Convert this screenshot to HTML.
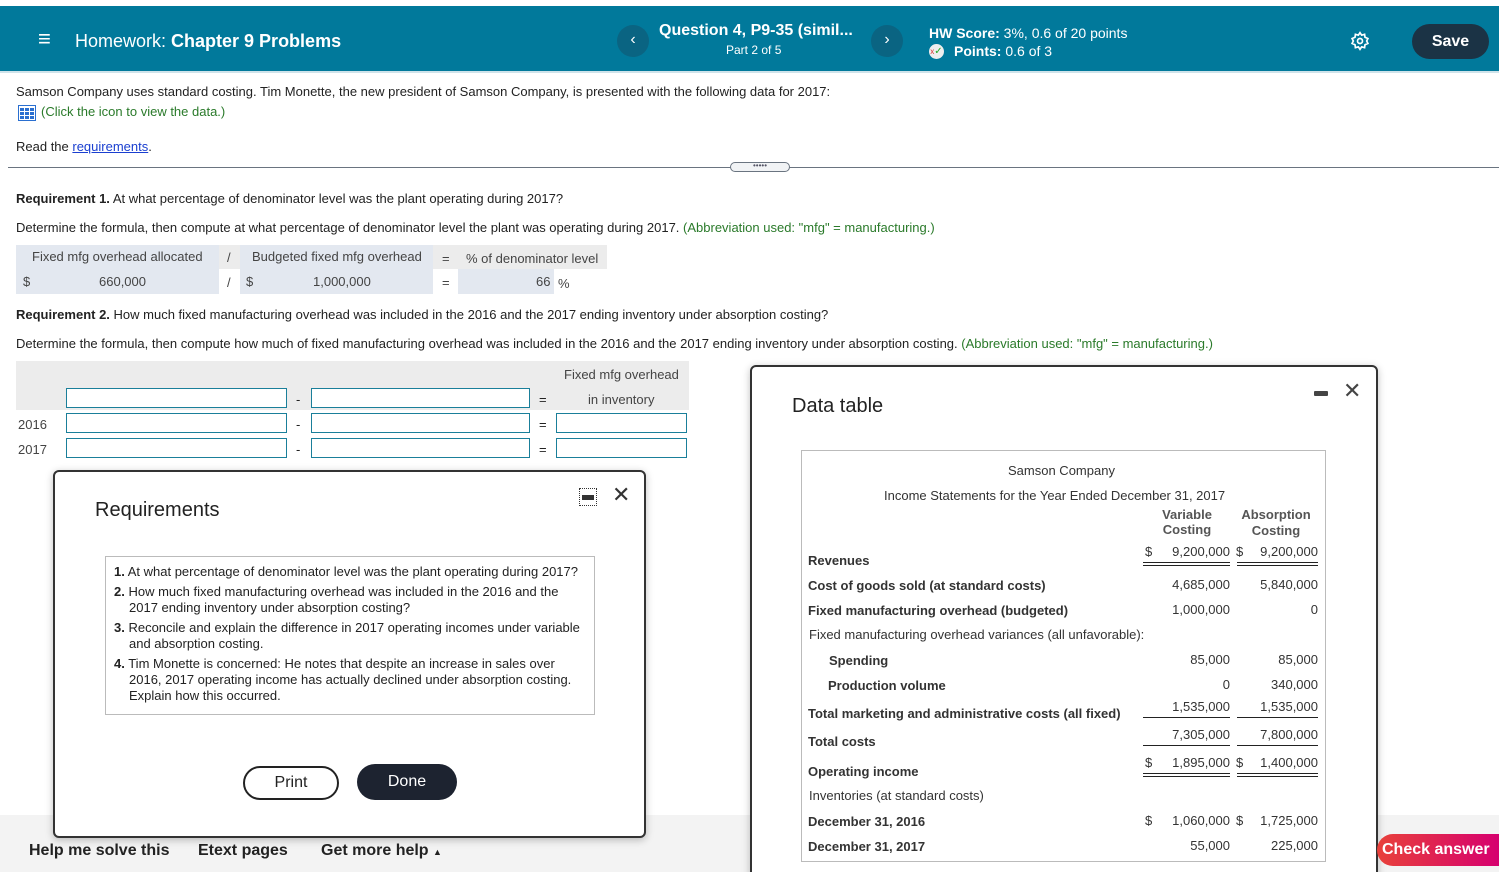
<!DOCTYPE html>
<html style="height:872px;overflow:hidden"><head><meta charset="utf-8"><style>
*{box-sizing:border-box;margin:0;padding:0}
body{width:1499px;height:872px;overflow:hidden;position:relative;background:#fff;font-family:"Liberation Sans",Arial,sans-serif;color:#222;font-size:13px}
.a{position:absolute;white-space:nowrap}
.hdr{position:absolute;left:0;top:6px;width:1499px;height:67px;background:#01799b;border-bottom:2px solid #cfe3ea}
.w{color:#fff}
.circ{position:absolute;width:32px;height:32px;border-radius:50%;background:#0a6482;color:#fff;text-align:center;line-height:30px;font-size:16px}
.inp{position:absolute;height:20px;border:1px solid #1a7f9a;background:#fff}
.g{color:#2a7a2a}
.modal{position:absolute;background:#fff;border:2px solid #333;border-radius:6px;box-shadow:0 2px 8px rgba(0,0,0,.25)}
.r{text-align:right}
.dt{font-size:13px;color:#333}
.b{font-weight:bold}
</style></head><body>
<div class="hdr">
 <div class="a w" style="left:38px;top:21px;font-size:22px;line-height:24px">&#8801;</div>
 <div class="a w" style="left:75px;top:25px;font-size:18px">Homework: <b>Chapter 9 Problems</b></div>
 <div class="circ" style="left:617px;top:19px">&#8249;</div>
 <div class="a w b" style="left:659px;top:16px;font-size:16px">Question 4, P9-35 (simil...</div>
 <div class="a w" style="left:726px;top:37px;font-size:12px">Part 2 of 5</div>
 <div class="circ" style="left:871px;top:19px">&#8250;</div>
 <div class="a w" style="left:929px;top:19px;font-size:14px"><b>HW Score:</b> 3%, 0.6 of 20 points</div>
 <div class="a" style="left:929px;top:38px;width:15px;height:15px;border-radius:50%;background:#eee;color:#2a2;font-size:10px;line-height:15px;text-align:center"><span style="color:#d33;font-size:8px">x</span>&#10003;</div>
 <div class="a w" style="left:954px;top:37px;font-size:14px"><b>Points:</b> 0.6 of 3</div>
 <svg class="a" style="left:1350px;top:25px" width="20" height="20" viewBox="0 0 24 24" fill="none" stroke="#fff" stroke-width="2"><circle cx="12" cy="12" r="3"/><path d="M12 2l2 3 3.5-1 .5 3.5 3.5 1.5-1.5 3 1.5 3-3.5 1.5-.5 3.5-3.5-1-2 3-2-3-3.5 1-.5-3.5L2.5 15 4 12 2.5 9 6 7.5 6.5 4 10 5z"/></svg>
 <div class="a w b" style="left:1412px;top:18px;width:77px;height:35px;border-radius:18px;background:#1b3345;text-align:center;line-height:35px;font-size:16px">Save</div>
</div>

<div class="a" style="left:16px;top:84px">Samson Company uses standard costing. Tim Monette, the new president of Samson Company, is presented with the following data for 2017:</div>
<svg class="a" style="left:18px;top:105px" width="18" height="16" viewBox="0 0 18 16"><rect x="0.5" y="0.5" width="17" height="15" fill="#fff" stroke="#2a6fd0"/><g fill="#2a6fd0"><rect x="2" y="3" width="4" height="3"/><rect x="7" y="3" width="4" height="3"/><rect x="12" y="3" width="4" height="3"/><rect x="2" y="7" width="4" height="3"/><rect x="7" y="7" width="4" height="3"/><rect x="12" y="7" width="4" height="3"/><rect x="2" y="11" width="4" height="3"/><rect x="7" y="11" width="4" height="3"/><rect x="12" y="11" width="4" height="3"/></g></svg>
<div class="a g" style="left:41px;top:104px">(Click the icon to view the data.)</div>
<div class="a" style="left:16px;top:139px">Read the <span style="color:#1a3fd0;text-decoration:underline">requirements</span>.</div>
<div class="a" style="left:8px;top:167px;width:1491px;height:1px;background:#6a7480"></div>
<div class="a" style="left:730px;top:162px;width:60px;height:10px;border:1px solid #6a7480;border-radius:5px;background:#f1f3f5;text-align:center;font-size:8px;line-height:6px;color:#556">•••••</div>

<div class="a" style="left:16px;top:191px"><b>Requirement 1.</b> At what percentage of denominator level was the plant operating during 2017?</div>
<div class="a" style="left:16px;top:220px">Determine the formula, then compute at what percentage of denominator level the plant was operating during 2017. <span class="g">(Abbreviation used: "mfg" = manufacturing.)</span></div>
<div class="a" style="left:16px;top:245px;width:591px;height:24px;background:#ececec"></div>
<div class="a" style="left:16px;top:245px;width:203px;height:49px;background:#e3e8f0"></div>
<div class="a" style="left:240px;top:245px;width:193px;height:49px;background:#e3e8f0"></div>
<div class="a" style="left:458px;top:269px;width:96px;height:25px;background:#e3e8f0"></div>
<div class="a" style="left:32px;top:249px;color:#444">Fixed mfg overhead allocated</div>
<div class="a" style="left:227px;top:250px;color:#444">/</div>
<div class="a" style="left:252px;top:249px;color:#444">Budgeted fixed mfg overhead</div>
<div class="a" style="left:442px;top:251px;color:#444">=</div>
<div class="a" style="left:466px;top:251px;color:#444">% of denominator level</div>
<div class="a" style="left:23px;top:274px;color:#444">$</div>
<div class="a" style="left:99px;top:274px;color:#444">660,000</div>
<div class="a" style="left:227px;top:275px;color:#444">/</div>
<div class="a" style="left:246px;top:274px;color:#444">$</div>
<div class="a" style="left:313px;top:274px;color:#444">1,000,000</div>
<div class="a" style="left:442px;top:275px;color:#444">=</div>
<div class="a" style="left:536px;top:274px;color:#444">66</div>
<div class="a" style="left:558px;top:276px;color:#444">%</div>

<div class="a" style="left:16px;top:307px"><b>Requirement 2.</b> How much fixed manufacturing overhead was included in the 2016 and the 2017 ending inventory under absorption costing?</div>
<div class="a" style="left:16px;top:336px">Determine the formula, then compute how much of fixed manufacturing overhead was included in the 2016 and the 2017 ending inventory under absorption costing. <span class="g">(Abbreviation used: "mfg" = manufacturing.)</span></div>
<div class="a" style="left:16px;top:361px;width:673px;height:49px;background:#ececec"></div>
<div class="a" style="left:564px;top:367px;color:#444">Fixed mfg overhead</div>
<div class="a" style="left:588px;top:392px;color:#444">in inventory</div>
<div class="inp" style="left:66px;top:388px;width:221px"></div><div class="a" style="left:296px;top:392px">-</div>
<div class="inp" style="left:311px;top:388px;width:219px"></div><div class="a" style="left:539px;top:392px">=</div>
<div class="a" style="left:18px;top:417px;color:#444">2016</div>
<div class="inp" style="left:66px;top:413px;width:221px"></div><div class="a" style="left:296px;top:417px">-</div>
<div class="inp" style="left:311px;top:413px;width:219px"></div><div class="a" style="left:539px;top:417px">=</div>
<div class="inp" style="left:556px;top:413px;width:131px"></div>
<div class="a" style="left:18px;top:442px;color:#444">2017</div>
<div class="inp" style="left:66px;top:438px;width:221px"></div><div class="a" style="left:296px;top:442px">-</div>
<div class="inp" style="left:311px;top:438px;width:219px"></div><div class="a" style="left:539px;top:442px">=</div>
<div class="inp" style="left:556px;top:438px;width:131px"></div>

<div class="a" style="left:0;top:815px;width:1499px;height:57px;background:#f3f3f3"></div>
<div class="a b" style="left:29px;top:842px;font-size:16px">Help me solve this</div>
<div class="a b" style="left:198px;top:842px;font-size:16px">Etext pages</div>
<div class="a b" style="left:321px;top:842px;font-size:16px">Get more help <span style="font-size:9px">&#9650;</span></div>

<!-- Requirements modal -->
<div class="modal" style="left:53px;top:470px;width:593px;height:368px">
 <div class="a" style="left:524px;top:16px;width:18px;height:18px;border:1px dotted #333"><div style="margin:6px 2px;height:5px;background:#333"></div></div>
 <div class="a" style="left:557px;top:10px;font-size:22px;color:#333">&#10005;</div>
 <div class="a" style="left:40px;top:27px;font-size:20px;color:#222">Requirements</div>
 <div class="a" style="left:50px;top:84px;width:490px;height:159px;border:1px solid #bbb"></div>
 <div class="a" style="left:59px;top:92px;width:470px;white-space:normal;line-height:16px;font-size:13px">
  <div style="padding-left:15px;text-indent:-15px;margin-bottom:4px"><b>1.</b> At what percentage of denominator level was the plant operating during 2017?</div>
  <div style="padding-left:15px;text-indent:-15px;margin-bottom:4px"><b>2.</b> How much fixed manufacturing overhead was included in the 2016 and the 2017 ending inventory under absorption costing?</div>
  <div style="padding-left:15px;text-indent:-15px;margin-bottom:4px"><b>3.</b> Reconcile and explain the difference in 2017 operating incomes under variable and absorption costing.</div>
  <div style="padding-left:15px;text-indent:-15px"><b>4.</b> Tim Monette is concerned: He notes that despite an increase in sales over<br>2016, 2017 operating income has actually declined under absorption costing.<br>Explain how this occurred.</div>
 </div>
 <div class="a" style="left:188px;top:294px;width:96px;height:34px;border:2px solid #222;border-radius:17px;text-align:center;line-height:30px;font-size:16px">Print</div>
 <div class="a" style="left:302px;top:292px;width:100px;height:36px;background:#1d2330;color:#fff;border-radius:18px;text-align:center;line-height:36px;font-size:16px">Done</div>
</div>

<!-- Data table modal -->
<div class="modal" style="left:750px;top:365px;width:628px;height:520px">
 <div class="a" style="left:562px;top:24px;width:14px;height:5px;background:#444;border-radius:1px"></div>
 <div class="a" style="left:591px;top:11px;font-size:22px;color:#444">&#10005;</div>
 <div class="a" style="left:40px;top:28px;font-size:20px;color:#222">Data table</div>
</div>
<div class="a" style="left:801px;top:450px;width:525px;height:412px;border:1px solid #bbb"></div>
<div class="dt">
 <div class="a" style="left:1008px;top:463px">Samson Company</div>
 <div class="a" style="left:884px;top:488px">Income Statements for the Year Ended December 31, 2017</div>
 <div class="a b" style="left:1160px;top:507px;width:54px;text-align:center;font-weight:bold;color:#555">Variable<br>Costing</div>
 <div class="a b" style="left:1240px;top:507px;width:72px;text-align:center;color:#555;line-height:16px">Absorption<br>Costing</div>
 <div class="a b" style="left:808px;top:553px">Revenues</div>
 <div class="a b" style="left:808px;top:578px">Cost of goods sold (at standard costs)</div>
 <div class="a b" style="left:808px;top:603px">Fixed manufacturing overhead (budgeted)</div>
 <div class="a" style="left:809px;top:627px">Fixed manufacturing overhead variances (all unfavorable):</div>
 <div class="a b" style="left:829px;top:653px">Spending</div>
 <div class="a b" style="left:828px;top:678px">Production volume</div>
 <div class="a b" style="left:808px;top:706px">Total marketing and administrative costs (all fixed)</div>
 <div class="a b" style="left:808px;top:734px">Total costs</div>
 <div class="a b" style="left:808px;top:764px">Operating income</div>
 <div class="a" style="left:809px;top:788px">Inventories (at standard costs)</div>
 <div class="a b" style="left:808px;top:814px">December 31, 2016</div>
 <div class="a b" style="left:808px;top:839px">December 31, 2017</div>

 <div class="a" style="left:1145px;top:544px">$</div><div class="a r" style="left:1150px;top:544px;width:80px">9,200,000</div>
 <div class="a" style="left:1236px;top:544px">$</div><div class="a r" style="left:1240px;top:544px;width:78px">9,200,000</div>
 <div class="a r" style="left:1150px;top:577px;width:80px">4,685,000</div><div class="a r" style="left:1240px;top:577px;width:78px">5,840,000</div>
 <div class="a r" style="left:1150px;top:602px;width:80px">1,000,000</div><div class="a r" style="left:1240px;top:602px;width:78px">0</div>
 <div class="a r" style="left:1150px;top:652px;width:80px">85,000</div><div class="a r" style="left:1240px;top:652px;width:78px">85,000</div>
 <div class="a r" style="left:1150px;top:677px;width:80px">0</div><div class="a r" style="left:1240px;top:677px;width:78px">340,000</div>
 <div class="a r" style="left:1150px;top:699px;width:80px">1,535,000</div><div class="a r" style="left:1240px;top:699px;width:78px">1,535,000</div>
 <div class="a r" style="left:1150px;top:727px;width:80px">7,305,000</div><div class="a r" style="left:1240px;top:727px;width:78px">7,800,000</div>
 <div class="a" style="left:1145px;top:755px">$</div><div class="a r" style="left:1150px;top:755px;width:80px">1,895,000</div>
 <div class="a" style="left:1236px;top:755px">$</div><div class="a r" style="left:1240px;top:755px;width:78px">1,400,000</div>
 <div class="a" style="left:1145px;top:813px">$</div><div class="a r" style="left:1150px;top:813px;width:80px">1,060,000</div>
 <div class="a" style="left:1236px;top:813px">$</div><div class="a r" style="left:1240px;top:813px;width:78px">1,725,000</div>
 <div class="a r" style="left:1150px;top:838px;width:80px">55,000</div><div class="a r" style="left:1240px;top:838px;width:78px">225,000</div>
</div>
<!-- rules -->
<div class="a" style="left:1143px;top:562px;width:87px;height:4px;border-top:1px solid #222;border-bottom:1px solid #222"></div>
<div class="a" style="left:1237px;top:562px;width:81px;height:4px;border-top:1px solid #222;border-bottom:1px solid #222"></div>
<div class="a" style="left:1143px;top:717px;width:87px;height:1px;background:#222"></div>
<div class="a" style="left:1237px;top:717px;width:81px;height:1px;background:#222"></div>
<div class="a" style="left:1143px;top:745px;width:87px;height:1px;background:#222"></div>
<div class="a" style="left:1237px;top:745px;width:81px;height:1px;background:#222"></div>
<div class="a" style="left:1143px;top:773px;width:87px;height:4px;border-top:1px solid #222;border-bottom:1px solid #222"></div>
<div class="a" style="left:1237px;top:773px;width:81px;height:4px;border-top:1px solid #222;border-bottom:1px solid #222"></div>

<div class="a b" style="left:1377px;top:834px;width:122px;height:32px;border-radius:16px 0 0 16px;background:linear-gradient(90deg,#e8413a,#d6006f);color:#fff;font-size:16px;line-height:32px;padding-left:5px">Check answer</div>
</body></html>
